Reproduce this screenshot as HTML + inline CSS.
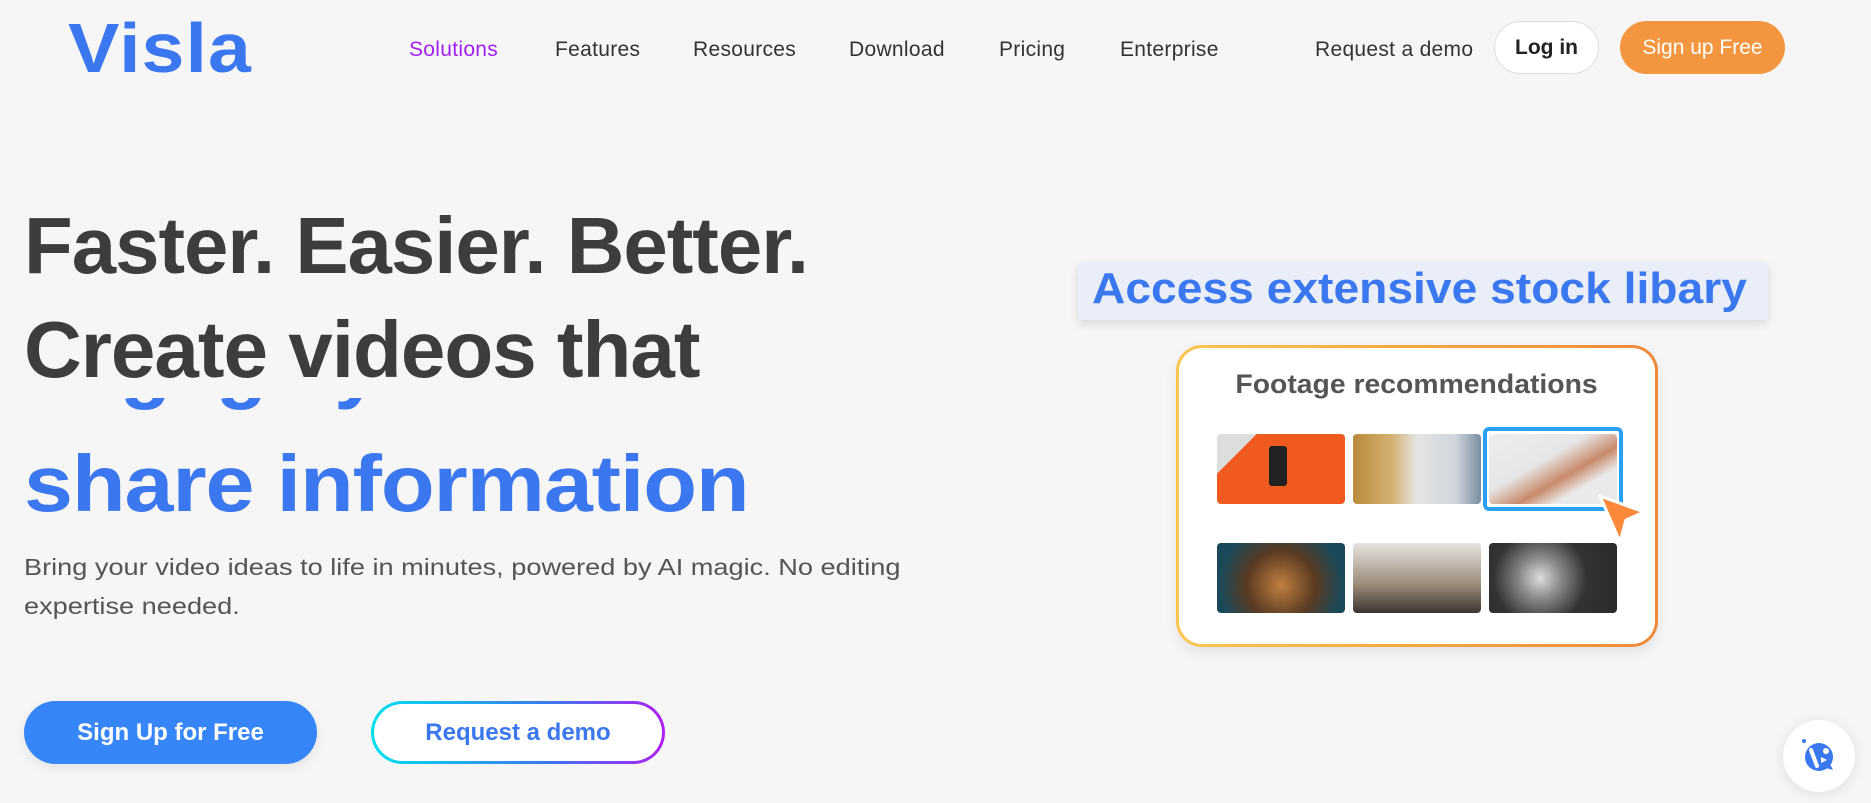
<!DOCTYPE html>
<html><head><meta charset="utf-8">
<style>
*{margin:0;padding:0;box-sizing:border-box}
body{width:1871px;height:803px;overflow:hidden;background:#f6f6f6;font-family:"Liberation Sans",sans-serif;position:relative}
.a{position:absolute;white-space:nowrap}
.nav{font-size:21px;color:#333;top:38px;letter-spacing:0.3px}
.h{font-weight:bold;font-size:80px;color:#3d3d3d;transform-origin:0 0;letter-spacing:-1px}
.th{position:absolute;width:128px;height:70px;border-radius:4px}
</style></head><body>
<div class="a" style="left:68px;top:8px;font-size:70px;font-weight:bold;color:#3b78f0;letter-spacing:1px;transform:scaleX(1.1);transform-origin:0 0">Visla</div>
<div class="a nav" style="left:409px;color:#a31ff0">Solutions</div>
<div class="a nav" style="left:555px">Features</div>
<div class="a nav" style="left:693px">Resources</div>
<div class="a nav" style="left:849px">Download</div>
<div class="a nav" style="left:999px">Pricing</div>
<div class="a nav" style="left:1120px">Enterprise</div>
<div class="a nav" style="left:1315px">Request a demo</div>
<div class="a" style="left:1494px;top:21px;width:105px;height:53px;border:1px solid #ddd;border-radius:27px;background:#fff;font-size:21px;font-weight:bold;color:#222;text-align:center;line-height:51px">Log in</div>
<div class="a" style="left:1620px;top:21px;width:165px;height:53px;border-radius:27px;background:#f4963f;font-size:21px;color:#fff;text-align:center;line-height:53px">Sign up Free</div>

<div class="a h" style="left:24px;top:200px;transform:scaleX(0.997)">Faster. Easier. Better.</div>
<div class="a h" style="left:24px;top:304px;transform:scaleX(1.0)">Create videos that</div>
<div class="a" style="left:24px;top:398px;width:760px;height:18px;overflow:hidden">
 <div class="a h" style="left:0;top:-78px;color:#3b78f0;transform:scaleX(1.05)">engage your</div>
</div>
<div class="a h" style="left:24px;top:438px;color:#3b78f0;transform:scaleX(1.1)">share information</div>
<div class="a" style="left:24px;top:548px;font-size:23px;line-height:39px;color:#555;transform:scaleX(1.18);transform-origin:0 0">Bring your video ideas to life in minutes, powered by AI magic. No editing<br>expertise needed.</div>

<div class="a" style="left:24px;top:701px;width:293px;height:63px;border-radius:32px;background:#3686fa;color:#fff;font-weight:bold;font-size:24px;text-align:center;line-height:63px;box-shadow:0 4px 12px rgba(0,0,0,.08)">Sign Up for Free</div>
<div class="a" style="left:371px;top:701px;width:294px;height:63px;border-radius:32px;background:linear-gradient(90deg,#00e0f0,#3b78f0 60%,#b01ff0);padding:3px">
 <div style="width:100%;height:100%;background:#fff;border-radius:30px;color:#3b78f0;font-weight:bold;font-size:24px;text-align:center;line-height:57px">Request a demo</div>
</div>

<div class="a" style="left:1078px;top:262px;width:690px;height:58px;background:#e9eef9;border-radius:3px;box-shadow:0 4px 10px rgba(0,0,0,.12)"></div>
<div class="a" style="left:1092px;top:264px;font-size:44px;font-weight:bold;color:#3b78f0;transform:scaleX(1.05);transform-origin:0 0">Access extensive stock libary</div>

<div class="a" style="left:1176px;top:345px;width:482px;height:302px;border-radius:26px;background:linear-gradient(90deg,#fbc650,#f2a040 60%,#ee8a3c);padding:3px;box-shadow:0 6px 14px rgba(0,0,0,.08)">
 <div style="width:100%;height:100%;background:#fff;border-radius:23px"></div>
</div>
<div class="a" style="left:1176px;top:369px;width:482px;text-align:center;font-size:27px;font-weight:bold;color:#555"><span style="display:inline-block;transform:scaleX(1.05)">Footage recommendations</span></div>
<div class="th" style="left:1217px;top:434px;background:linear-gradient(135deg,#ddd 0 20%,#f05a1e 20%);"><div style="position:absolute;left:52px;top:12px;width:18px;height:40px;background:#222;border-radius:3px"></div></div>
<div class="th" style="left:1353px;top:434px;background:linear-gradient(90deg,#b88a3a,#d4b070 30%,#e4e4e4 50%,#cfd6dc 80%,#7a8ea0)"></div>
<div class="a" style="left:1483px;top:427px;width:140px;height:84px;border:4px solid #2aa0f5;border-radius:6px"></div>
<div class="th" style="left:1489px;top:434px;background:linear-gradient(150deg,#eee,#e6e6e6 40%,#c88a6a 60%,#eaeaea 75%)"></div>
<svg class="a" style="left:1596px;top:492px" width="52" height="56" viewBox="0 0 52 56"><path d="M4 4 L48 20 L30 28 L24 50 Z" fill="#fa8a3a" stroke="#fff" stroke-width="3" stroke-linejoin="round"/></svg>
<div class="th" style="left:1217px;top:543px;background:radial-gradient(circle at 50% 60%,#c08040,#5a3a22 45%,#1a4a5a 80%)"></div>
<div class="th" style="left:1353px;top:543px;background:linear-gradient(180deg,#e8e4e0,#9a8a78 60%,#3a3430)"></div>
<div class="th" style="left:1489px;top:543px;background:radial-gradient(circle at 40% 50%,#ddd,#888 25%,#333 55%,#2a2a2a)"></div>

<div class="a" style="left:1783px;top:720px;width:72px;height:72px;border-radius:50%;background:#fff;box-shadow:0 2px 14px rgba(0,0,0,.1)"></div>
<svg class="a" style="left:1799px;top:736px" width="40" height="40" viewBox="0 0 40 40"><circle cx="20" cy="21" r="14" fill="#3a78f0"/><path d="M20 30 L34 34 L30 26Z" fill="#3a78f0"/><circle cx="5" cy="5" r="2" fill="#3a78f0"/><path d="M12 14 L18 30" stroke="#fff" stroke-width="4" stroke-linecap="round"/><circle cx="27" cy="15" r="3" fill="#fff"/><path d="M22 21 L28 24 L22 27Z" fill="#fff"/></svg>
</body></html>
